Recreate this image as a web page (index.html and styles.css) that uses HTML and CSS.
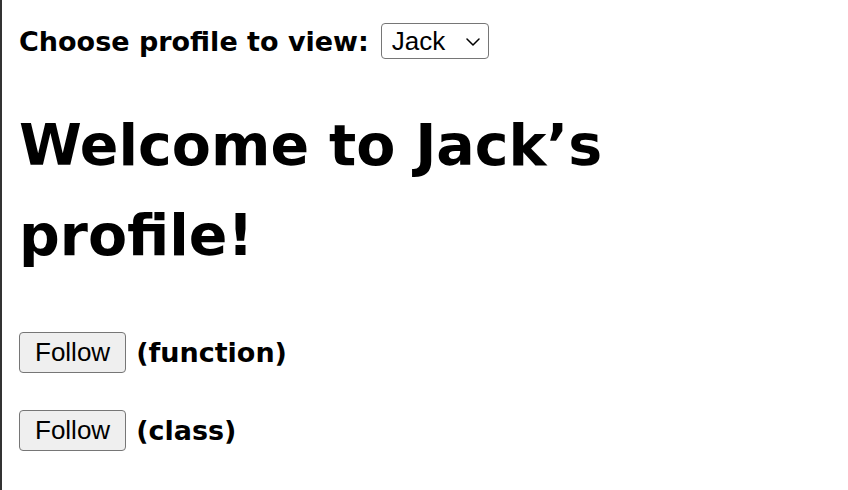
FILE: index.html
```html
<!DOCTYPE html>
<html lang="en">
<head>
<meta charset="utf-8">
<title>Profile</title>
<link rel="stylesheet" href="styles.css">
</head>
<body>
<div class="page">
  <label class="chooser">
    <span class="chooser-label">Choose profile to view:</span>
    <span class="select-wrap">
      <select class="select">
        <option>Jack</option>
        <option>Jill</option>
      </select>
      <svg class="chevron" width="14" height="8" viewBox="0 0 14 8" aria-hidden="true"><path d="M1 1 L7 7 L13 1" fill="none" stroke="#000" stroke-width="1.5" stroke-linecap="round" stroke-linejoin="round"/></svg>
    </span>
  </label>
  <h1 class="title">Welcome to Jack’s profile!</h1>
  <div class="actions">
    <div class="action-row"><button class="btn" type="button">Follow</button><span class="tag">(function)</span></div>
    <div class="action-row"><button class="btn" type="button">Follow</button><span class="tag">(class)</span></div>
  </div>
</div>
</body>
</html>
```
FILE: styles.css
```css
html, body {
  margin: 0;
  padding: 0;
  background: #fff;
}
body {
  font-family: "DejaVu Sans", "Liberation Sans", sans-serif;
  font-weight: bold;
  font-size: 27px;
  color: #000;
}
.page {
  box-sizing: border-box;
  min-height: 100vh;
  border-left: 2px solid #333;
  padding: 23px 17px 0 17px;
  display: flex;
  flex-direction: column;
  align-items: flex-start;
}
.chooser {
  display: flex;
  align-items: center;
  gap: 12px;
  height: 36px;
}
.select-wrap {
  position: relative;
  display: inline-block;
  height: 36px;
}
.select {
  appearance: none;
  -webkit-appearance: none;
  box-sizing: border-box;
  width: 108px;
  height: 36px;
  margin: 0;
  padding: 0 30px 0 10px;
  border: 1px solid #767676;
  border-radius: 4px;
  background: #fff;
  font-family: "Liberation Sans", Arial, sans-serif;
  font-weight: normal;
  font-size: 26px;
  color: #000;
}
.chevron {
  position: absolute;
  right: 9px;
  top: 15px;
  pointer-events: none;
}
.title {
  margin: 41px 0 0 0;
  font-size: 57px;
  line-height: 90px;
  font-weight: bold;
  max-width: 640px;
}
.actions {
  margin-top: 52px;
  display: flex;
  flex-direction: column;
  gap: 37px;
}
.action-row {
  display: flex;
  align-items: center;
  gap: 10px;
}
.btn {
  box-sizing: border-box;
  height: 41px;
  margin: 0;
  padding: 0 15px;
  border: 1px solid #767676;
  border-radius: 4px;
  background: #efefef;
  font-family: "Liberation Sans", Arial, sans-serif;
  font-weight: normal;
  font-size: 26px;
  color: #000;
}
.tag {
  line-height: 1;
}
```
